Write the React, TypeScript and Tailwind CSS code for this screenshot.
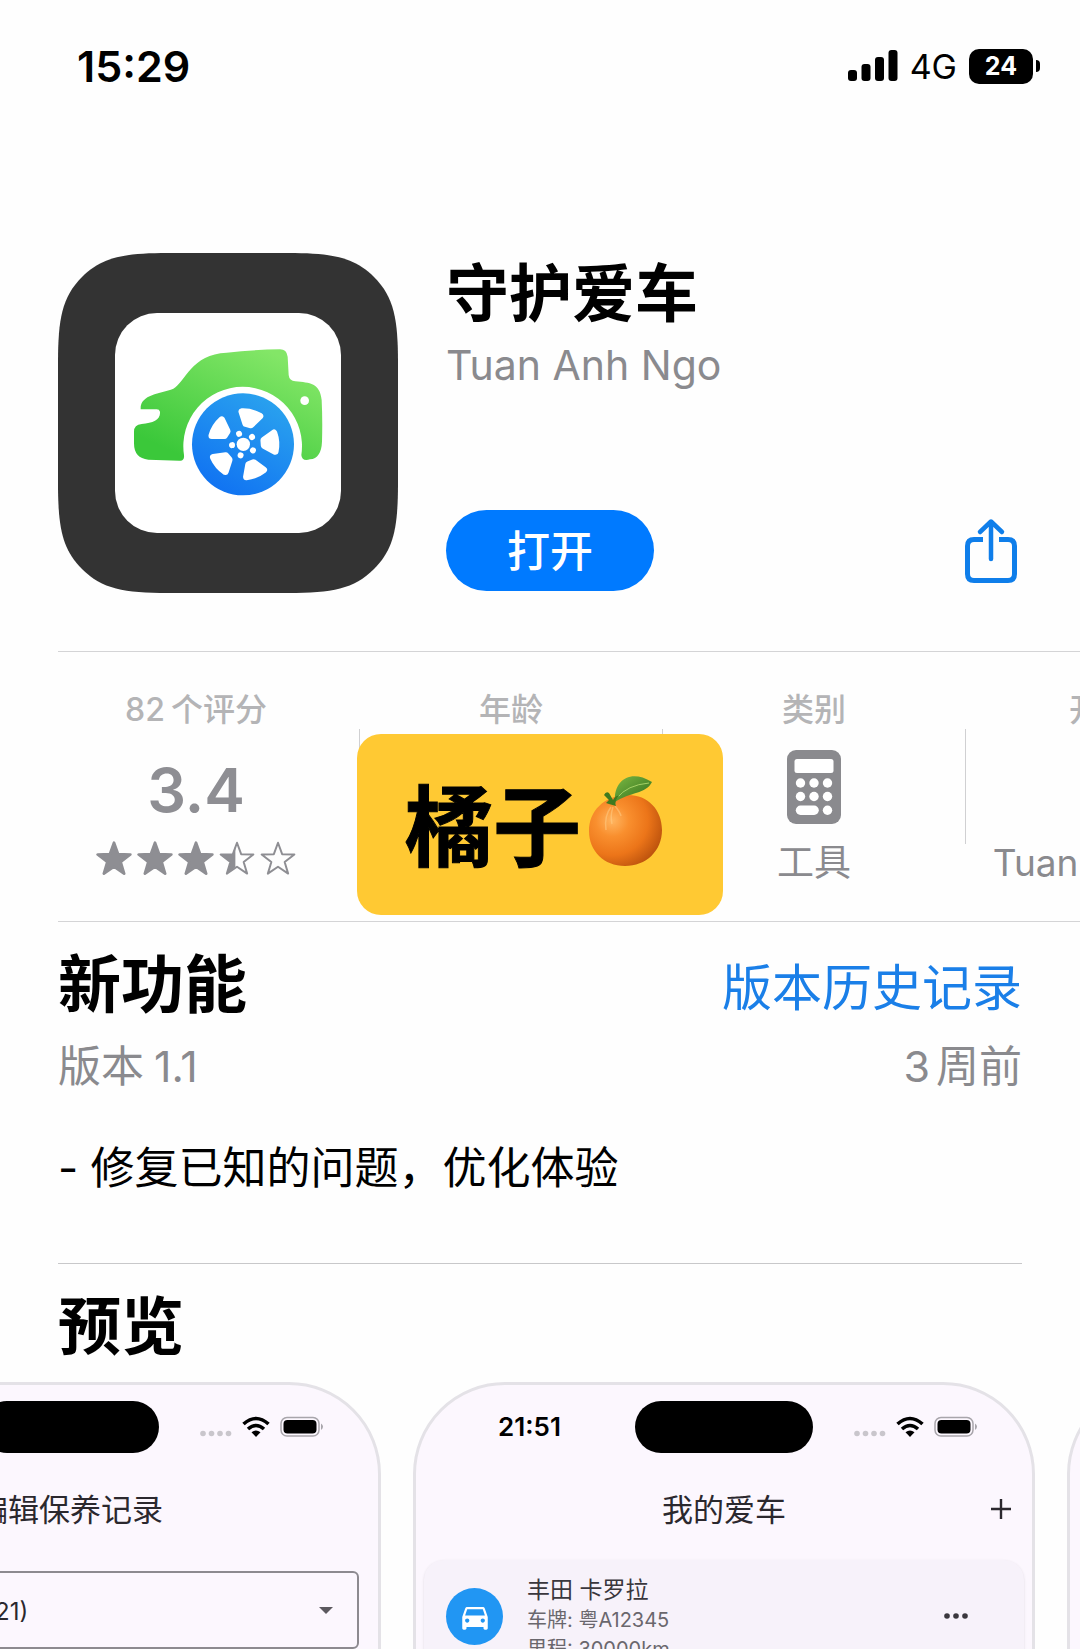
import type { ReactNode } from 'react';

const STAR_PATH = 'M17.5 2.5 L21.3 13 L32.5 13.3 L23.6 20.1 L26.8 30.8 L17.5 24.5 L8.2 30.8 L11.4 20.1 L2.5 13.3 L13.7 13 Z';
const WHEEL_ANGLES = [-76, -4, 68, 140, 212];
const BOLT_ANGLES = [-112, -40, 32, 104, 176];

function AppIcon() {
  return (
    <svg viewBox="0 0 340 340" className="size-[340px] shrink-0" role="img" aria-label="守护爱车">
      <defs>
        <linearGradient id="body" x1="0.1" y1="1" x2="0.9" y2="0">
          <stop offset="0.1" stopColor="#3bc83a" />
          <stop offset="0.9" stopColor="#83e667" />
        </linearGradient>
        <linearGradient id="wheel" x1="0.2" y1="1" x2="0.8" y2="0">
          <stop offset="0" stopColor="#0f70f2" />
          <stop offset="1" stopColor="#2ba4ee" />
        </linearGradient>
      </defs>
      <path
        d="M0 110 C0 66 4 44 24 24 C44 4 66 0 110 0 H230 C274 0 296 4 316 24 C336 44 340 66 340 110 V230 C340 274 336 296 316 316 C296 336 274 340 230 340 H110 C66 340 44 336 24 316 C4 296 0 274 0 230 Z"
        fill="#333333"
      />
      <rect x="57" y="60" width="226" height="220" rx="42" fill="#ffffff" />
      <g transform="translate(52 67) scale(0.33333)">
        <path
          d="M92 268 C90 222 150 222 190 206 C226 186 244 102 350 98 Q430 89 510 88 Q530 88 533 110 L536 165 Q538 183 556 184 C600 188 630 190 635 240 Q638 300 636 365 Q634 415 600 418 Q576 425 574 405 A178 178 0 1 0 222 405 Q224 424 208 422 L115 419 Q72 415 72 370 L72 335 Q72 314 95 312 C130 308 152 300 150 275 Q148 268 140 268 Z"
          fill="url(#body)"
        />
        <circle cx="584" cy="242" r="13" fill="#ffffff" />
        <circle cx="399" cy="373" r="153" fill="url(#wheel)" />
        <g transform="translate(400 373)" fill="#ffffff">
          {WHEEL_ANGLES.map((angle) => (
            <path
              key={angle}
              d="M62 -8 L94 -28 Q102 0 94 28 L62 8 Z"
              transform={`rotate(${angle})`}
              stroke="#ffffff"
              strokeWidth="20"
              strokeLinejoin="round"
            />
          ))}
          {BOLT_ANGLES.map((angle) => (
            <circle key={angle} cx="34" cy="0" r="9" transform={`rotate(${angle})`} />
          ))}
          <circle r="20" />
        </g>
      </g>
    </svg>
  );
}

function ShareIcon() {
  return (
    <svg viewBox="0 0 52 66" className="h-[66px] w-[52px]" fill="none" stroke="currentColor" strokeWidth="5" aria-hidden="true">
      <path d="M18 21.5 H9 Q2.5 21.5 2.5 28 V56 Q2.5 62.5 9 62.5 H43 Q49.5 62.5 49.5 56 V28 Q49.5 21.5 43 21.5 H34" />
      <path d="M26 41 V4 M15 14 L26 3.5 L37 14" strokeLinecap="round" strokeLinejoin="round" strokeWidth="4.5" />
    </svg>
  );
}

function SignalIcon() {
  return (
    <svg viewBox="0 0 50 32" className="h-8 w-[50px]" aria-hidden="true">
      <rect x="0" y="20" width="9" height="11" rx="3" />
      <rect x="13.5" y="14" width="9" height="17" rx="3" />
      <rect x="27" y="7" width="9" height="24" rx="3" />
      <rect x="40.5" y="0" width="9" height="31" rx="3" />
    </svg>
  );
}

function Star({ fill }: { fill: 'full' | 'half' | 'empty' }) {
  return (
    <svg viewBox="1 1 33 31" className="h-[34px] w-9" fill="none" strokeLinejoin="round" aria-hidden="true">
      {fill === 'half' && <path d="M16 5 V25 L8.2 30.8 L11.4 20.1 L2.5 13.3 L13.7 13 Z" fill="#8e8e93" />}
      <path
        d={STAR_PATH}
        fill={fill === 'full' ? '#8e8e93' : 'none'}
        stroke="#8e8e93"
        strokeWidth={fill === 'full' ? 2.5 : 1.8}
      />
    </svg>
  );
}

function CalculatorIcon() {
  return (
    <svg viewBox="0 0 54 74" className="mb-2 h-[74px] w-[54px]" aria-hidden="true">
      <rect width="54" height="74" rx="9" fill="#8a8a8e" />
      <g fill="#ffffff">
        <rect x="7.5" y="9" width="39" height="14" rx="2.5" />
        {[13.5, 27, 40.5].map((cx) => (
          <g key={cx}>
            <circle cx={cx} cy="33" r="4.7" />
            <circle cx={cx} cy="46.5" r="4.7" />
          </g>
        ))}
        <rect x="8.8" y="55.5" width="23" height="9.4" rx="4.7" />
        <circle cx="40.5" cy="60.2" r="4.7" />
      </g>
    </svg>
  );
}

function OrangeIcon() {
  return (
    <svg viewBox="0 0 74 90" className="mb-2 h-[90px] w-[74px]" aria-hidden="true">
      <defs>
        <radialGradient id="peel" cx="0.32" cy="0.36" r="0.75">
          <stop offset="0" stopColor="#ffb560" />
          <stop offset="0.3" stopColor="#f98f2e" />
          <stop offset="0.65" stopColor="#ec7519" />
          <stop offset="1" stopColor="#b9500c" />
        </radialGradient>
        <linearGradient id="leaf" x1="0" y1="0" x2="1" y2="1">
          <stop offset="0" stopColor="#7cb843" />
          <stop offset="1" stopColor="#2f6d1c" />
        </linearGradient>
      </defs>
      <path d="M37 19 C58 18 73 33 73 54 C73 75 57 90 36 90 C15 90 0 75 0 55 C0 35 15 20 37 19 Z" fill="url(#peel)" />
      <path d="M22 31 Q15 40 17 54 M24 31 Q21 40 23 48 M26 30 Q31 36 32 40" stroke="#ffd08a" strokeWidth="1.5" fill="none" opacity="0.5" />
      <path d="M26 24 C25 6 40 -8 63 6 C57 18 41 16 26 26 Z" fill="url(#leaf)" />
      <path d="M28 22 Q38 9 60 7" stroke="#a4d066" strokeWidth="1" fill="none" />
      <path d="M15 19 Q17 15 20 17 L24 24 Q27 19 30 20 Q25 25 27 30 L20 28 L17 27 L20 24 Z" fill="#3f7a1f" />
    </svg>
  );
}

function PhoneStatusIcons() {
  return (
    <svg viewBox="0 0 124 22" className="h-[22px] w-[124px]" aria-hidden="true">
      {[3, 11.5, 20, 28.5].map((cx) => (
        <circle key={cx} cx={cx} cy="17.5" r="2.8" fill="#c9c6cc" />
      ))}
      <g fill="none" stroke="#000000" strokeWidth="3.6">
        <path d="M43.5 8 Q56 -3 68.5 8" />
        <path d="M48 13 Q56 6 64 13" />
      </g>
      <path d="M51.5 16.2 Q56 12.8 60.5 16.2 L56 21 Z" />
      <rect x="81" y="1.5" width="38" height="18.5" rx="6" fill="none" stroke="#a8a5ab" strokeWidth="1.5" />
      <rect x="83.5" y="4" width="33" height="13.5" rx="4" />
      <path d="M121 7.5 Q125 10.7 121 14 Z" fill="#a8a5ab" />
    </svg>
  );
}

function CarIcon() {
  return (
    <svg viewBox="0 0 24 24" className="size-[34px]" fill="#ffffff" aria-hidden="true">
      <path d="M18.92 6.01C18.72 5.42 18.16 5 17.5 5h-11c-.66 0-1.21.42-1.42 1.01L3 12v8c0 .55.45 1 1 1h1c.55 0 1-.45 1-1v-1h12v1c0 .55.45 1 1 1h1c.55 0 1-.45 1-1v-8l-2.08-5.99zM6.5 16c-.83 0-1.5-.67-1.5-1.5S5.67 13 6.5 13s1.5.67 1.5 1.5S7.33 16 6.5 16zm11 0c-.83 0-1.5-.67-1.5-1.5s.67-1.5 1.5-1.5 1.5.67 1.5 1.5-.67 1.5-1.5 1.5zM5 11l1.5-4.5h11L19 11H5z" />
    </svg>
  );
}

function Stat({ label, caption, children, first }: { label: ReactNode; caption?: ReactNode; children?: ReactNode; first?: boolean }) {
  return (
    <div className={`flex shrink-0 flex-col items-center pt-[38px] pb-[38px] text-[#8a8a8e] ${first ? 'w-[326px]' : 'w-[302px]'}`}>
      <div className="text-[32px] leading-10 font-medium whitespace-nowrap text-[#b4b4b6]">{label}</div>
      <div className="mt-[21px] flex h-20 items-center">{children}</div>
      <div className="mt-3 flex h-10 items-center text-[37px] whitespace-nowrap">{caption}</div>
    </div>
  );
}

function StatDivider() {
  return <div className="h-[115px] w-px shrink-0 bg-[#d0d0d2]" />;
}

function PhoneCard({ time, title, action, children }: { time?: string; title?: string; action?: ReactNode; children?: ReactNode }) {
  return (
    <article className="h-[1344px] w-[622px] shrink-0 rounded-[92px] border-[3px] border-[#e4e2e7] bg-[#fcf7fe] text-[#2b282e]">
      {title && (
        <>
          <div className="mt-4 grid grid-cols-[1fr_178px_1fr] items-center">
            <span className="pl-2 text-center text-[26px] leading-none font-semibold text-black">{time}</span>
            <span className="h-[52px] rounded-full bg-black" />
            <span className="flex justify-end pr-[54px]">
              <PhoneStatusIcons />
            </span>
          </div>
          <div className="mt-8 grid h-12 grid-cols-[1fr_auto_1fr] items-center">
            <h3 className="col-start-2 text-[31px] leading-none">{title}</h3>
            <div className="flex justify-end pr-5">{action}</div>
          </div>
          {children}
        </>
      )}
    </article>
  );
}

export default function App() {
  return (
    <div className="h-screen overflow-hidden bg-[#fefefe] font-['Inter','Noto_Sans_CJK_SC',sans-serif] text-black" lang="zh-CN">
      <div className="flex items-center justify-between pt-[48px] pr-10 pl-[77px]">
        <time className="text-[43px] leading-9 font-semibold">15:29</time>
        <div className="flex h-9 items-center">
          <SignalIcon />
          <span className="ml-3 pt-0.5 text-[34px] leading-9">4G</span>
          <span className="ml-3 flex h-[35px] w-16 items-center justify-center rounded-[10px] bg-black pt-0.5 text-[25px] font-bold text-white">24</span>
          <span className="ml-[3px] h-3 w-1 rounded-r-full bg-black" />
        </div>
      </div>

      <header className="mt-[169px] flex gap-12 px-[58px]">
        <AppIcon />
        <div className="flex flex-1 flex-col justify-between pt-0.5 pb-0.5">
          <div>
            <h1 className="text-[63px] leading-[76px] font-semibold">守护爱车</h1>
            <p className="mt-1 text-[41px] leading-[60px] text-[#8a8a8e]">Tuan Anh Ngo</p>
          </div>
          <div className="flex items-center justify-between">
            <button type="button" className="h-[81px] w-[208px] rounded-full bg-[#007aff] pt-0.5 text-[43px] font-medium text-white">
              打开
            </button>
            <button type="button" aria-label="分享" className="mr-[5px] text-[#0f7eea]">
              <ShareIcon />
            </button>
          </div>
        </div>
      </header>

      <hr className="mt-[58px] ml-[58px] border-[#d4d4d6]" />
      <section className="relative">
        <div className="flex items-center overflow-hidden pl-[33px]">
          <Stat
            first
            label={
              <>
                82<span className="ml-1.5">个评分</span>
              </>
            }
            caption={
              <span className="mb-2.5 flex gap-[5px]">
                <Star fill="full" />
                <Star fill="full" />
                <Star fill="full" />
                <Star fill="half" />
                <Star fill="empty" />
              </span>
            }
          >
            <span className="text-[61px] font-semibold text-[#8e8e93]">3.4</span>
          </Stat>
          <StatDivider />
          <Stat label="年龄" />
          <StatDivider />
          <Stat label="类别" caption="工具">
            <CalculatorIcon />
          </Stat>
          <StatDivider />
          <Stat label="开发者" caption="Tuan Anh Ngo" />
        </div>
        <div className="absolute top-[82px] left-[357px] flex h-[181px] w-[366px] items-center justify-center gap-2 rounded-3xl bg-[#ffc933] pr-3">
          <span className="pt-1 text-[88px] leading-none font-bold [-webkit-text-stroke:1px_black]">橘子</span>
          <OrangeIcon />
        </div>
      </section>
      <hr className="ml-[58px] border-[#d4d4d6]" />

      <section className="px-[58px] pt-6 pb-[65px]">
        <div className="flex items-center justify-between">
          <h2 className="text-[63px] leading-[76px] font-bold">新功能</h2>
          <a href="#history" className="pt-2 text-[50px] leading-[60px] text-[#1a7fe8]">
            版本历史记录
          </a>
        </div>
        <div className="mt-3.5 flex justify-between text-[43px] leading-[60px] text-[#8a8a8e]">
          <span>
            版本<span className="ml-2.5">1.1</span>
          </span>
          <span>
            3<span className="ml-1.5">周前</span>
          </span>
        </div>
        <p className="mt-[42px] text-[44px] leading-[60px]">- 修复已知的问题，优化体验</p>
      </section>
      <hr className="mx-[58px] border-[#c8c8ca]" />

      <section className="overflow-hidden pt-6">
        <h2 className="px-[58px] text-[63px] leading-[76px] font-bold">预览</h2>
        <div className="mt-[18px] -ml-[241px] flex gap-8">
          <PhoneCard title="编辑保养记录">
            <div className="relative mx-[19px] mt-[38px]">
              <select
                aria-label="车辆"
                className="h-[78px] w-full appearance-none rounded-md border-2 border-[#8d8a90] bg-transparent pt-1 pl-10 text-2xl"
              >
                <option>丰田 卡罗拉 (2021)</option>
              </select>
              <svg viewBox="0 0 14 7" className="pointer-events-none absolute top-9 right-[26px] h-[7px] w-3.5" fill="#5c595f" aria-hidden="true">
                <path d="M0 0 H14 L7 7 Z" />
              </svg>
            </div>
          </PhoneCard>

          <PhoneCard
            time="21:51"
            title="我的爱车"
            action={
              <button type="button" aria-label="添加">
                <svg viewBox="0 0 22 22" className="size-[22px]" stroke="#2b282e" strokeWidth="2.4" aria-hidden="true">
                  <path d="M11 1 V21 M1 11 H21" />
                </svg>
              </button>
            }
          >
            <div className="mx-2 mt-[27px] flex h-[180px] items-start rounded-[20px] bg-[#f7f2fa] pt-2.5 pr-14 pl-[22px] shadow-sm">
              <span className="mt-[18px] flex size-[57px] shrink-0 items-center justify-center rounded-full bg-[#2196f3]">
                <CarIcon />
              </span>
              <div className="ml-6 flex-1 text-xl leading-[29px] text-[#6a676d]">
                <h4 className="pt-1 text-[23px] leading-8 text-[#3a373d]">丰田 卡罗拉</h4>
                <p>车牌: 粤A12345</p>
                <p>里程: 30000km</p>
              </div>
              <button type="button" aria-label="更多" className="mt-[43px]">
                <svg viewBox="0 0 24 6" className="h-1.5 w-6" fill="#3a373d" aria-hidden="true">
                  <circle cx="3" cy="3" r="2.8" />
                  <circle cx="12" cy="3" r="2.8" />
                  <circle cx="21" cy="3" r="2.8" />
                </svg>
              </button>
            </div>
          </PhoneCard>

          <PhoneCard />
        </div>
      </section>
    </div>
  );
}
